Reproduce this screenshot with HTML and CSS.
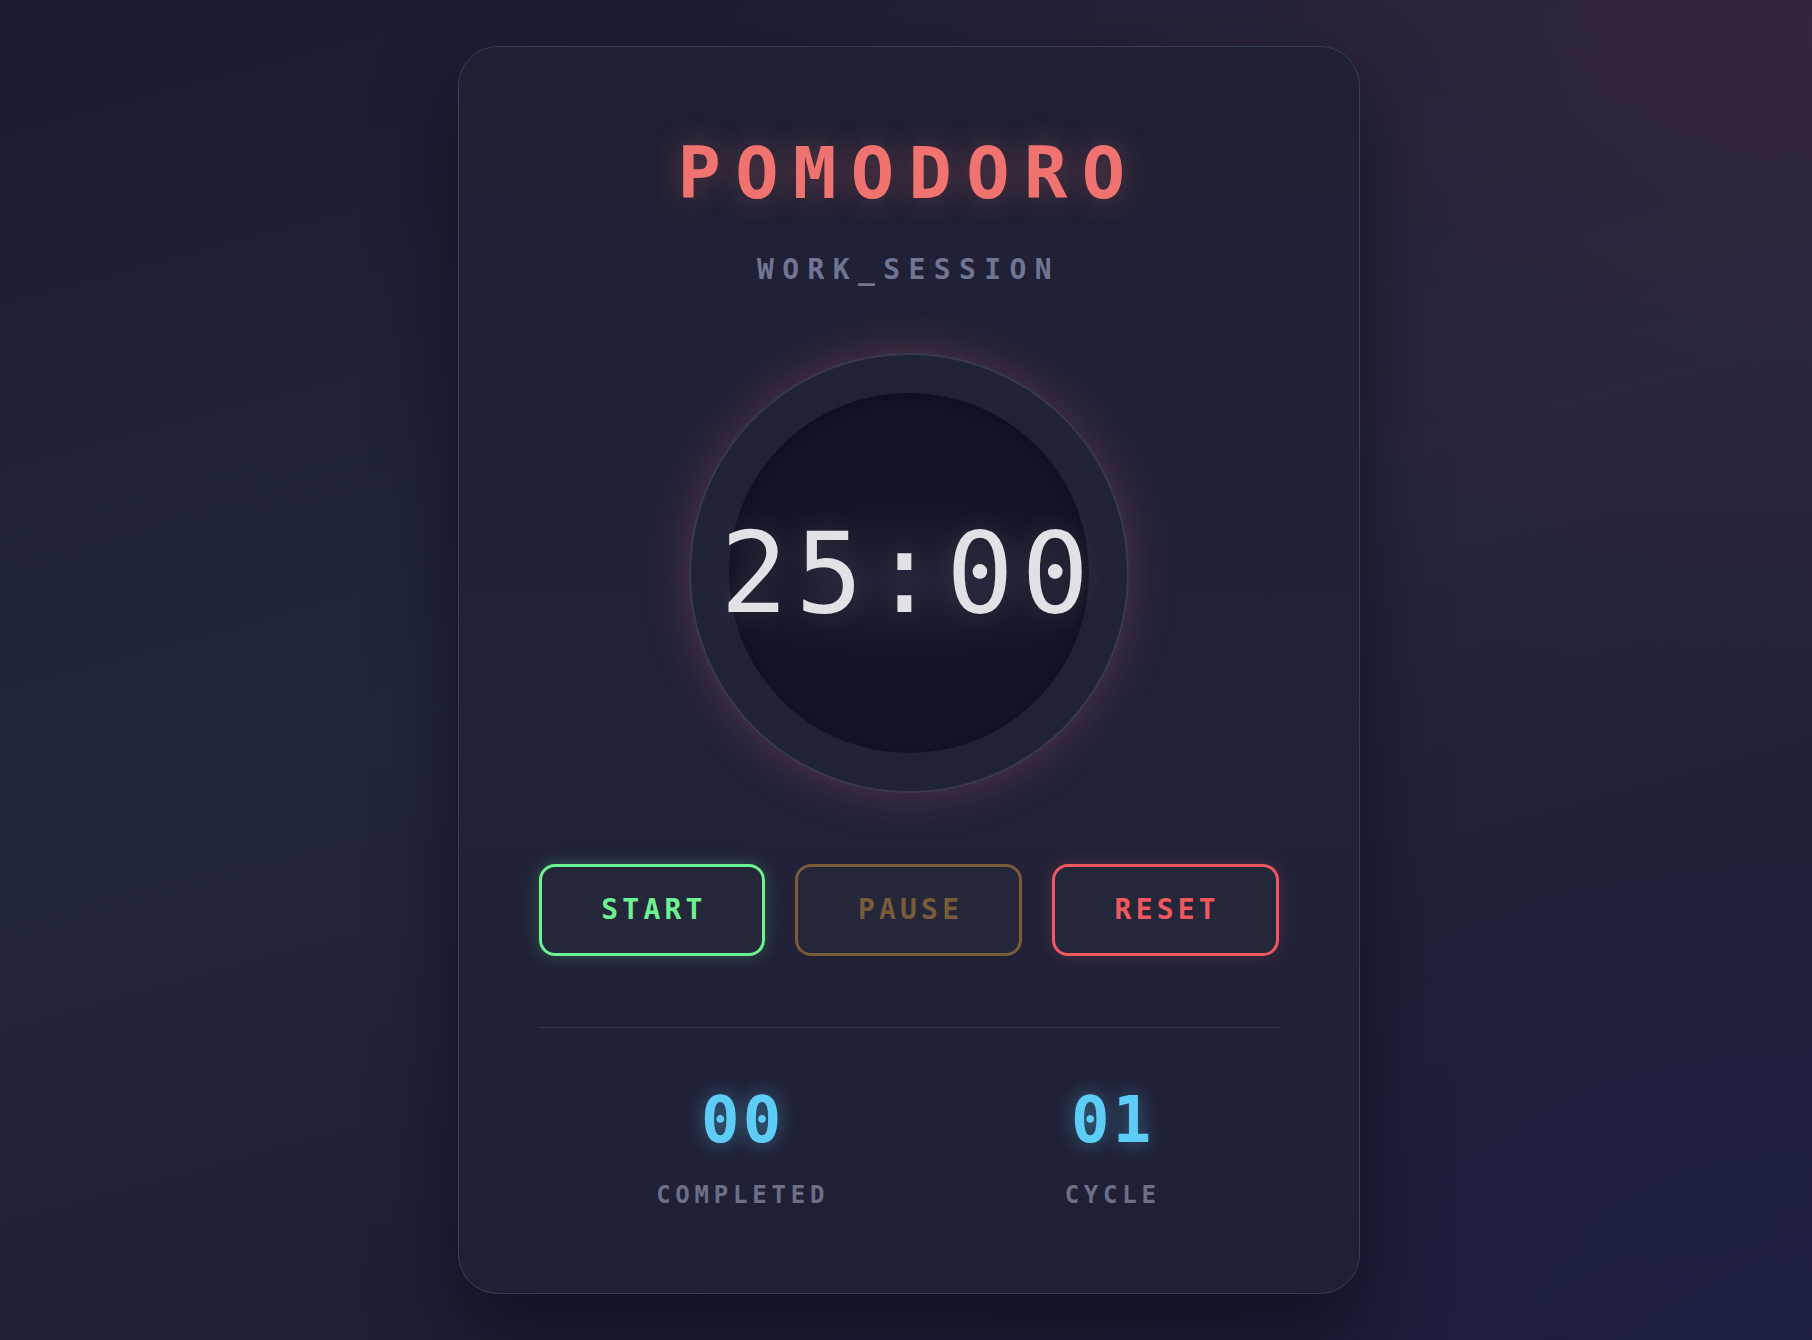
FILE: index.html
```html
<!DOCTYPE html>
<html lang="en">
<head>
<meta charset="utf-8">
<title>Pomodoro</title>
<link rel="stylesheet" href="styles.css">
</head>
<body>
<main class="page">
  <section class="card">
    <h1 class="title">POMODORO</h1>
    <p class="mode">WORK_SESSION</p>
    <div class="dial">
      <div class="face">
        <span class="time">25:00</span>
      </div>
    </div>
    <div class="controls">
      <button class="btn btn-start">START</button>
      <button class="btn btn-pause">PAUSE</button>
      <button class="btn btn-reset">RESET</button>
    </div>
    <div class="stats">
      <div class="stat">
        <span class="stat-value">00</span>
        <span class="stat-label">COMPLETED</span>
      </div>
      <div class="stat">
        <span class="stat-value">01</span>
        <span class="stat-label">CYCLE</span>
      </div>
    </div>
  </section>
</main>
</body>
</html>
```

FILE: styles.css
```css
* { box-sizing: border-box; }

html, body {
  margin: 0;
  height: 100%;
}

body {
  font-family: "DejaVu Sans Mono", "Liberation Mono", monospace;
  background:
    radial-gradient(ellipse 60% 55% at 100% 0%, rgba(58, 38, 62, 0.75), rgba(58, 38, 62, 0) 100%),
    radial-gradient(ellipse 45% 40% at 100% 100%, rgba(30, 32, 72, 0.7), rgba(30, 32, 72, 0) 100%),
    linear-gradient(165deg, #1a1c31 0%, #22263d 45%, #1f2037 75%, #1c1d34 100%);
  color: #e4e4e8;
}

.page {
  min-height: 100vh;
  display: flex;
  align-items: center;
  justify-content: center;
  padding-left: 5px;
}

.card {
  width: 902px;
  padding: 90px 80px 86px;
  border: 1px solid #3a3c50;
  border-radius: 40px;
  background: linear-gradient(180deg, #1f2033 0%, #21223a 55%, #1f2035 100%);
  box-shadow: 0 40px 80px rgba(8, 8, 16, 0.55);
  display: flex;
  flex-direction: column;
  align-items: center;
}

.title {
  margin: 0;
  font-size: 72px;
  line-height: 1;
  font-weight: bold;
  letter-spacing: 0.2em;
  color: #f07370;
  text-shadow: 0 0 30px rgba(240, 115, 112, 0.35);
}

.mode {
  margin: 47px 0 69px;
  font-size: 28px;
  line-height: 1;
  font-weight: bold;
  letter-spacing: 0.3em;
  color: #6f7592;
}

.dial {
  width: 440px;
  height: 440px;
  border-radius: 50%;
  border: 2px solid #383b4e;
  background: #202236;
  box-shadow: 0 0 45px rgba(232, 100, 110, 0.26);
  display: flex;
  align-items: center;
  justify-content: center;
  margin-bottom: 71px;
}

.face {
  width: 360px;
  height: 360px;
  border-radius: 50%;
  background: radial-gradient(ellipse 70% 22% at 50% 52%, #222338 0%, #171829 70%, #131428 100%);
  box-shadow: inset 0 4px 18px rgba(0, 0, 0, 0.35);
  display: flex;
  align-items: center;
  justify-content: center;
}

.time {
  font-size: 112px;
  line-height: 1;
  font-weight: normal;
  letter-spacing: 0.07em;
  color: #e2e2e6;
  text-shadow: 0 0 30px rgba(255, 255, 255, 0.12);
}

.controls {
  width: 100%;
  display: grid;
  grid-template-columns: repeat(3, 1fr);
  gap: 30px;
  margin-bottom: 71px;
}

.btn {
  font-family: inherit;
  font-size: 28px;
  line-height: 1;
  font-weight: bold;
  letter-spacing: 0.15em;
  padding: 29px 0 29px 0.15em;
  border: 3px solid;
  border-radius: 16px;
  background: #24263a;
  cursor: pointer;
}

.btn-start {
  color: #6ef190;
  border-color: #6ef190;
  box-shadow: 0 0 16px rgba(110, 241, 144, 0.25);
}

.btn-pause {
  color: #7a5b38;
  border-color: #7a5b38;
}

.btn-reset {
  color: #f0585d;
  border-color: #f0585d;
  box-shadow: 0 0 16px rgba(240, 88, 93, 0.2);
}

.stats {
  width: 100%;
  border-top: 1px solid #34364a;
  padding-top: 60px;
  display: flex;
  justify-content: space-around;
}

.stat {
  display: flex;
  flex-direction: column;
  align-items: center;
  gap: 31px;
}

.stat-value {
  font-size: 64px;
  line-height: 1;
  font-weight: bold;
  letter-spacing: 0.05em;
  color: #5dcdf8;
  text-shadow: 0 0 20px rgba(93, 205, 248, 0.45);
}

.stat-label {
  font-size: 24px;
  line-height: 1;
  font-weight: bold;
  letter-spacing: 0.2em;
  color: #6c6f88;
}
```
